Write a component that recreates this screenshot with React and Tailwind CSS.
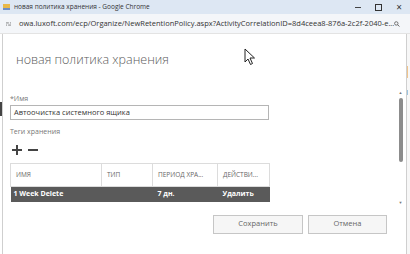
import React from "react";

const columns = [
  { label: "ИМЯ", w: "w-[91px]" },
  { label: "ТИП", w: "w-[51px]" },
  { label: "ПЕРИОД ХРА...", w: "w-[65px]" },
  { label: "ДЕЙСТВИ...", w: "w-[52px]" },
];

const TitleBar = () => (
  <div className="h-[14px] bg-[#dde7f3] flex items-center pl-[3px] pr-[8px]">
    <div className="w-[7px] h-[6px] bg-[#e9b949] border-b-2 border-[#6f8fc5] mr-[4px]" />
    <span className="text-[6.5px] text-[#333] leading-none">новая политика хранения - Google Chrome</span>
    <div className="ml-auto flex items-center gap-[14px] text-[#333]">
      <div className="w-[6px] h-px bg-[#444]" />
      <div className="w-[7px] h-[7px] border border-[#333]" />
      <span className="text-[10px] leading-none">×</span>
    </div>
  </div>
);

const AddressBar = () => (
  <div className="h-[20px] bg-[#f4f6f9] flex items-center pl-[6px] pr-[10px] border-b border-[#e3e3e3]">
    <svg width="7" height="6" viewBox="0 0 7 6" className="mr-[8px]">
      <path d="M0 1.5h4M5.5 1.5h1.5M0 4.5h1.5M3 4.5h4" stroke="#555" strokeWidth="1" />
    </svg>
    <span className="text-[7.5px] text-[#333] leading-none whitespace-nowrap">
      owa.luxoft.com/ecp/Organize/NewRetentionPolicy.aspx?ActivityCorrelationID=8d4ceea8-876a-2c2f-2040-e...
    </span>
    <svg width="8" height="8" viewBox="0 0 8 8" className="ml-auto">
      <circle cx="3.2" cy="3.2" r="2.4" fill="none" stroke="#555" strokeWidth="1.1" />
      <path d="M5 5l2.5 2.5" stroke="#555" strokeWidth="1.3" />
    </svg>
  </div>
);

const Cursor = () => (
  <svg width="12" height="18" viewBox="0 0 12 18" className="absolute left-[244px] top-[48px]">
    <path d="M1 1v13l3-3 2.5 5.5 2-1L6 10h4.5z" fill="white" stroke="#222" strokeWidth="1" strokeLinejoin="round" />
  </svg>
);

const Scrollbar = () => (
  <div className="w-[7px] mt-[57px] h-[114px] flex flex-col items-center">
    <span className="text-[4px] leading-none text-[#777] h-[5px]">▲</span>
    <div className="w-[4px] h-[64px] rounded-full bg-[#8c8c8c] mt-[2px]" />
    <span className="text-[4px] leading-none text-[#777] mt-auto">▼</span>
  </div>
);

export default function App() {
  return (
    <div className="w-[410px] h-[254px] bg-white relative overflow-hidden flex flex-col font-['Open_Sans','Liberation_Sans',sans-serif]">
      <TitleBar />
      <AddressBar />
      <div className="flex-1 flex">
        <div className="w-[3px] flex flex-col border-r border-[#cfcfcf]">
          <div className="mt-[68px] h-[14px] w-[2px] bg-[#444]" />
        </div>
        <div className="flex-1 flex pl-[7px] pr-[2px]">
          <div className="flex-1 flex flex-col">
            <div className="mt-[18px] ml-[6px] text-[12.5px] font-light text-[#5a5a5a] leading-[16px]">
              новая политика хранения
            </div>
            <div className="mt-[26px] text-[7px] text-[#777] leading-[10px]">*Имя</div>
            <div className="mt-[1px] w-[259px] h-[15px] border border-[#b5b5b5] flex items-center px-[3px] text-[7.5px] text-[#333]">
              Автоочистка системного ящика
            </div>
            <div className="mt-[7px] text-[7px] text-[#777] leading-[10px]">Теги хранения</div>
            <div className="mt-[6px] h-[14px] flex items-center gap-[6px] pl-[2px]">
              <svg width="10" height="10" viewBox="0 0 10 10">
                <path d="M5 0v10M0 5h10" stroke="#444" strokeWidth="2" />
              </svg>
              <svg width="10" height="10" viewBox="0 0 10 10">
                <path d="M0 5h10" stroke="#444" strokeWidth="2" />
              </svg>
            </div>
            <table className="mt-[6px] w-[259px] border-collapse table-fixed text-left">
              <thead>
                <tr className="h-[23px]">
                  {columns.map((c) => (
                    <th key={c.label} className={`${c.w} border border-[#dcdcdc] px-[5px] text-[6.5px] font-normal text-[#666] whitespace-nowrap`}>
                      {c.label}
                    </th>
                  ))}
                </tr>
              </thead>
              <tbody>
                <tr className="h-[15px] bg-[#5a5a5a] text-white text-[7px] font-bold">
                  <td className="px-[3px]">1 Week Delete</td>
                  <td className="px-[5px]"></td>
                  <td className="px-[5px]">7 дн.</td>
                  <td className="px-[5px]">Удалить</td>
                </tr>
              </tbody>
            </table>
            <div className="mt-[13px] flex gap-[5px] pl-[203px]">
              <button className="w-[90px] h-[19px] border border-[#c6c6c6] bg-[#f6f6f6] text-[7.5px] text-[#666]">Сохранить</button>
              <button className="w-[79px] h-[19px] border border-[#c6c6c6] bg-[#f6f6f6] text-[7.5px] text-[#666]">Отмена</button>
            </div>
          </div>
          <Scrollbar />
        </div>
        <div className="w-[4px] border-l border-[#cfcfcf] bg-[#f7f7f7] flex flex-col">
          <div className="mt-[32px] h-[12px] w-[1px] bg-[#f0c48c]" />
          <div className="mt-[12px] h-[5px] w-[1px] bg-[#9cc4e0]" />
        </div>
      </div>
      <Cursor />
    </div>
  );
}
